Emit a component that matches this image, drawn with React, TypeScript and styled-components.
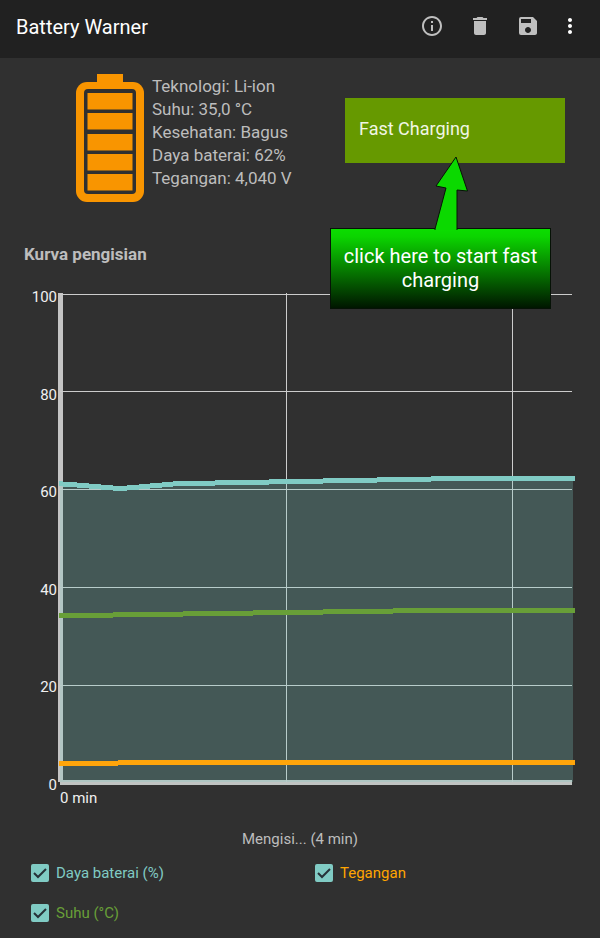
import React from "react";
import styled, { createGlobalStyle } from "styled-components";
import { MdDelete, MdInfoOutline, MdMoreVert, MdSave } from "react-icons/md";

const GlobalStyle = createGlobalStyle`
  *, *::before, *::after { box-sizing: border-box; }
  body {
    margin: 0;
    background: #303030;
    color: #bdbdbd;
    font-family: Roboto, "Liberation Sans", sans-serif;
  }
`;

const Page = styled.div`
  min-height: 100vh;
  display: flex;
  flex-direction: column;
`;

const AppBar = styled.header`
  display: flex;
  align-items: center;
  height: 58px;
  padding: 0 12px 6px 16px;
  background: #212121;
`;

const Title = styled.h1`
  flex: 1;
  margin: 0;
  padding-top: 2px;
  font-size: 20px;
  line-height: 24px;
  font-weight: 400;
  color: #ffffff;
`;

const IconButton = styled.button<{ $compact?: boolean }>`
  display: flex;
  align-items: center;
  justify-content: center;
  width: ${(p) => (p.$compact ? 36 : 48)}px;
  height: 48px;
  padding: 0;
  border: 0;
  background: none;
  color: ${(p) => (p.$compact ? "#ffffff" : "#bfbfbf")};
  font-size: 24px;
  cursor: pointer;
`;

const Summary = styled.section`
  display: flex;
  justify-content: space-between;
  align-items: flex-start;
  padding: 16px 35px 0 76px;
`;

const BatteryInfo = styled.div`
  display: flex;
  gap: 8px;
`;

const BatteryIcon = styled.svg`
  display: block;
  flex: none;
`;

const Facts = styled.ul`
  margin: 0;
  padding: 1px 0 0;
  list-style: none;
  font-size: 17px;
  line-height: 23px;
  white-space: nowrap;
`;

const FastCharge = styled.div`
  position: relative;
  width: 220px;
  margin-top: 24px;
`;

const FastButton = styled.button`
  display: block;
  width: 100%;
  height: 65px;
  padding: 0 14px 4px;
  border: 0;
  background: #669900;
  color: #f1f6e4;
  font: inherit;
  font-size: 18px;
  text-align: left;
  cursor: pointer;
`;

const Callout = styled.div`
  position: absolute;
  z-index: 1;
  top: 130px;
  left: -15px;
  width: 221px;
  padding: 15px 8px 16px;
  border: 1px solid #061206;
  background: linear-gradient(#0bdd00 0%, #0bd400 10%, #001600 100%);
  color: #ffffff;
  font-size: 20px;
  line-height: 24px;
  text-align: center;
`;

const CalloutArrow = styled.svg`
  position: absolute;
  left: 103px;
  bottom: 100%;
  margin-bottom: -1px;
`;

const Heading = styled.h2`
  margin: 40px 24px 0;
  font-size: 17px;
  line-height: 24px;
  font-weight: 700;
`;

const Chart = styled.figure`
  display: grid;
  grid-template-columns: 57px 1fr;
  column-gap: 1px;
  margin: 22px 25px 0 0;
`;

const YAxis = styled.div`
  display: flex;
  flex-direction: column;
  justify-content: space-between;
  height: 506px;
  text-align: right;
  font-size: 15px;
  line-height: 18px;
  color: #f0f0f0;
`;

const PlotColumn = styled.div`
  padding-top: 5px;
`;

const Plot = styled.svg`
  display: block;
  width: 100%;
  height: 493px;
`;

const XAxis = styled.figcaption`
  padding: 3px 2px 0;
  font-size: 15px;
  line-height: 18px;
  color: #f0f0f0;
`;

const Status = styled.p`
  margin: 22px 0 4px;
  font-size: 15px;
  line-height: 20px;
  text-align: center;
`;

const Legend = styled.div`
  display: grid;
  grid-template-columns: 1fr 1fr;
  padding: 0 16px;
`;

const LegendItem = styled.label<{ $color: string }>`
  display: flex;
  align-items: center;
  gap: 7px;
  height: 40px;
  padding-left: 15px;
  font-size: 15px;
  color: ${(p) => p.$color};
`;

const CheckWrap = styled.span`
  position: relative;
  width: 18px;
  height: 18px;
`;

const CheckInput = styled.input`
  appearance: none;
  display: block;
  width: 18px;
  height: 18px;
  margin: 0;
  border: 2px solid #80cbc4;
  border-radius: 2px;
  &:checked { background: #80cbc4; }
  & + svg { visibility: hidden; }
  &:checked + svg { visibility: visible; }
`;

const Tick = styled.svg`
  position: absolute;
  inset: 0;
  pointer-events: none;
`;

type Step = [x: number, top: number];

const PLOT_RIGHT = 517;
const LINE = 5;

const charge: Step[] = [
  [1, 188], [5, 189], [19, 190], [31, 191], [43, 192], [55, 193], [69, 192],
  [81, 191], [92, 190], [104, 189], [115, 188], [157, 187], [211, 186],
  [265, 185], [319, 184], [373, 183],
];
const temperature: Step[] = [
  [1, 320], [55, 319], [125, 318], [195, 317], [265, 316], [335, 315],
];
const voltage: Step[] = [[1, 468], [60, 467]];

function edge(steps: Step[], right: number, offset = 0) {
  return steps
    .map(([x, top], i) => {
      const next = i + 1 < steps.length ? steps[i + 1][0] : right;
      return `${x} ${top + offset} L${next} ${top + offset}`;
    })
    .join(" L");
}

function band(steps: Step[]) {
  const lower: string[] = [];
  for (let i = steps.length - 1; i >= 0; i--) {
    const next = i + 1 < steps.length ? steps[i + 1][0] : PLOT_RIGHT;
    const y = steps[i][1] + LINE;
    lower.push(`${next} ${y} L${steps[i][0]} ${y}`);
  }
  return `M${edge(steps, PLOT_RIGHT)} L${lower.join(" L")}Z`;
}

const area = `M${edge([[2, 188], ...charge.slice(1)], 515, 2)} L515 489 L2 489Z`;

const facts = [
  "Teknologi: Li-ion",
  "Suhu: 35,0 °C",
  "Kesehatan: Bagus",
  "Daya baterai: 62%",
  "Tegangan: 4,040 V",
];

const series = [
  { name: "Daya baterai (%)", color: "#80cbc4" },
  { name: "Tegangan", color: "#ffa500" },
  { name: "Suhu (°C)", color: "#689f38" },
];

function Battery() {
  return (
    <BatteryIcon width="68" height="128" viewBox="0 0 68 128" aria-hidden="true">
      <path d="M21 0h26v10H21z" fill="#f99500" />
      <rect y="8" width="68" height="120" rx="11" fill="#f99500" />
      <rect x="8" y="15" width="52" height="105" rx="4" fill="#303030" />
      {[19, 39, 60, 80, 100].map((y) => (
        <rect key={y} x="11.5" y={y} width="45" height="16.5" fill="#f99500" />
      ))}
    </BatteryIcon>
  );
}

export default function App() {
  return (
    <Page>
      <GlobalStyle />
      <AppBar>
        <Title>Battery Warner</Title>
        <IconButton type="button" aria-label="Info"><MdInfoOutline /></IconButton>
        <IconButton type="button" aria-label="Hapus"><MdDelete /></IconButton>
        <IconButton type="button" aria-label="Simpan"><MdSave /></IconButton>
        <IconButton type="button" aria-label="Menu" $compact><MdMoreVert /></IconButton>
      </AppBar>

      <Summary>
        <BatteryInfo>
          <Battery />
          <Facts>
            {facts.map((fact) => <li key={fact}>{fact}</li>)}
          </Facts>
        </BatteryInfo>
        <FastCharge>
          <FastButton type="button">Fast Charging</FastButton>
          <Callout role="tooltip">
            <CalloutArrow width="36" height="74" viewBox="0 0 36 74" aria-hidden="true">
              <path
                d="M1 74V73L12 32L2 30L22 1L33.5 35L23 34V74"
                fill="#0bd900"
                stroke="#061206"
              />
            </CalloutArrow>
            click here to start fast charging
          </Callout>
        </FastCharge>
      </Summary>

      <Heading>Kurva pengisian</Heading>
      <Chart>
        <YAxis>
          {[100, 80, 60, 40, 20, 0].map((v) => <span key={v}>{v}</span>)}
        </YAxis>
        <PlotColumn>
          <Plot
            viewBox="0 0 517 493"
            preserveAspectRatio="none"
            shapeRendering="crispEdges"
            role="img"
            aria-label="Kurva pengisian"
          >
            <rect x="0" y="0" width="5" height="489" fill="#c4c4c4" />
            <rect x="2" y="487" width="512" height="5" fill="#c0c4c2" />
            {[1, 98, 196, 294, 392].map((y) => (
              <rect key={y} x="2" y={y} width="512" height="1" fill="#cccccc" />
            ))}
            {[228, 454].map((x) => (
              <rect key={x} x={x} y="0" width="1" height="489" fill="#cccccc" />
            ))}
            <path d={area} fill="#80cbc4" fillOpacity="0.26" />
            <path d={band(charge)} fill="#80cbc4" />
            <path d={band(temperature)} fill="#689f38" />
            <path d={band(voltage)} fill="#ffa50a" />
          </Plot>
          <XAxis>0 min</XAxis>
        </PlotColumn>
      </Chart>

      <Status>Mengisi... (4 min)</Status>
      <Legend>
        {series.map((s) => (
          <LegendItem key={s.name} $color={s.color}>
            <CheckWrap>
              <CheckInput type="checkbox" defaultChecked />
              <Tick width="18" height="18" viewBox="0 0 18 18" aria-hidden="true">
                <path d="M3 9L7 13L15 5" fill="none" stroke="#263238" strokeWidth="2" />
              </Tick>
            </CheckWrap>
            {s.name}
          </LegendItem>
        ))}
      </Legend>
    </Page>
  );
}
